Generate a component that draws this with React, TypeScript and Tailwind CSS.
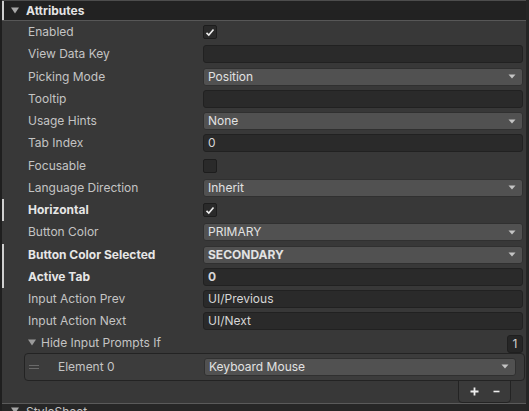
import React from 'react';

type Row =
  | { label: string; kind: 'check'; checked: boolean; bold?: boolean }
  | { label: string; kind: 'text'; value: string; bold?: boolean }
  | { label: string; kind: 'drop'; value: string; bold?: boolean };

const rows: Row[] = [
  { label: 'Enabled', kind: 'check', checked: true },
  { label: 'View Data Key', kind: 'text', value: '' },
  { label: 'Picking Mode', kind: 'drop', value: 'Position' },
  { label: 'Tooltip', kind: 'text', value: '' },
  { label: 'Usage Hints', kind: 'drop', value: 'None' },
  { label: 'Tab Index', kind: 'text', value: '0' },
  { label: 'Focusable', kind: 'check', checked: false },
  { label: 'Language Direction', kind: 'drop', value: 'Inherit' },
  { label: 'Horizontal', kind: 'check', checked: true, bold: true },
  { label: 'Button Color', kind: 'drop', value: 'PRIMARY' },
  { label: 'Button Color Selected', kind: 'drop', value: 'SECONDARY', bold: true },
  { label: 'Active Tab', kind: 'text', value: '0', bold: true },
  { label: 'Input Action Prev', kind: 'text', value: 'UI/Previous' },
  { label: 'Input Action Next', kind: 'text', value: 'UI/Next' },
];

const Arrow = () => (
  <svg width="8" height="5" viewBox="0 0 8 5" className="shrink-0">
    <path d="M0.5 0.5 L7.5 0.5 L4 4.5 Z" fill="#c4c4c4" />
  </svg>
);

const Fold = ({ color = '#a8a8a8' }: { color?: string }) => (
  <svg width="8" height="7" viewBox="0 0 8 7" className="shrink-0">
    <path d="M0 0.5 L8 0.5 L4 6.5 Z" fill={color} />
  </svg>
);

const Check = ({ checked }: { checked: boolean }) => (
  <div className="w-[14px] h-[14px] rounded-[2px] bg-[#2a2a2a] border border-[#1d1d1d] flex items-center justify-center">
    {checked && (
      <svg width="10" height="9" viewBox="0 0 10 9">
        <path d="M1.5 4.8 L3.8 7 L8.5 1.5" stroke="#eeeeee" strokeWidth="1.6" fill="none" />
      </svg>
    )}
  </div>
);

const Dropdown = ({ value, bold }: { value: string; bold?: boolean }) => (
  <div className="flex-1 h-[18px] rounded-[3px] bg-[#515151] border border-[#303030] flex items-center justify-between pl-[4px] pr-[6px]">
    <span className={`text-[#e2e2e2] ${bold ? 'font-bold' : ''}`}>{value}</span>
    <Arrow />
  </div>
);

const TextField = ({ value, bold }: { value: string; bold?: boolean }) => (
  <div className="flex-1 h-[18px] rounded-[3px] bg-[#2a2a2a] border border-[#212121] flex items-center pl-[4px]">
    <span className={`text-[#d6d6d6] ${bold ? 'font-bold' : ''}`}>{value}</span>
  </div>
);

export default function App() {
  return (
    <div
      className="w-[529px] h-[411px] overflow-hidden bg-[#383838] text-[12px] leading-none flex"
      style={{ fontFamily: 'Inter, "Noto Sans", sans-serif' }}
    >
      <div className="w-[2px] bg-[#1f1f1f] shrink-0" />
      <div className="flex-1 flex flex-col border-r-[3px] border-[#252525]">
        <div className="border-t border-[#4d4d4d]" />
        {/* Attributes header */}
        <div className="h-[20px] bg-[#222222] border-b border-[#575757] flex items-center">
          <div className="w-[2px] h-full bg-[#cfcfcf]" />
          <div className="ml-[7px]">
            <Fold />
          </div>
          <span className="ml-[7px] font-bold text-[#e4e4e4] text-[12px]">Attributes</span>
        </div>

        <div className="flex flex-col">
          {rows.map((r) => (
            <div key={r.label} className="h-[22.25px] flex items-center relative">
              {r.bold && <div className="absolute left-0 top-0 bottom-0 w-[2px] bg-[#cfcfcf]" />}
              <div
                className={`w-[201px] pl-[26px] ${r.bold ? 'font-bold text-[#e6e6e6]' : 'text-[#c4c4c4]'}`}
              >
                {r.label}
              </div>
              <div className="flex-1 flex items-center pr-[3px]">
                {r.kind === 'check' && <Check checked={r.checked} />}
                {r.kind === 'text' && <TextField value={r.value} bold={r.bold} />}
                {r.kind === 'drop' && <Dropdown value={r.value} bold={r.bold} />}
              </div>
            </div>
          ))}

          {/* Hide Input Prompts If */}
          <div className="h-[20px] flex items-center">
            <div className="ml-[26px]">
              <Fold color="#9a9a9a" />
            </div>
            <span className="ml-[5px] text-[#c4c4c4]">Hide Input Prompts If</span>
            <div className="ml-auto mr-[3px] mt-[3px] w-[16px] h-[18px] rounded-[3px] bg-[#262626] border border-[#1f1f1f] flex items-center justify-center text-[#d0d0d0]">
              1
            </div>
          </div>

          <div className="ml-[22px] mr-[1px] h-[28px] rounded-[4px] bg-[#3c3c3c] border border-[#232323] flex items-center">
            <div className="ml-[4px] flex flex-col gap-[2px]">
              <div className="w-[10px] h-[1px] bg-[#6a6a6a]" />
              <div className="w-[10px] h-[1px] bg-[#6a6a6a]" />
            </div>
            <span className="ml-[19px] w-[146px] text-[#c4c4c4]">Element 0</span>
            <div className="flex-1 flex mr-[8px]">
              <Dropdown value="Keyboard Mouse" />
            </div>
          </div>

          <div className="flex justify-end pr-[15px]">
            <div className="w-[53px] h-[23px] -mt-[1px] rounded-b-[4px] bg-[#3a3a3a] border border-[#232323] flex items-center justify-center gap-[14px] text-[#eeeeee] font-bold">
              <svg width="9" height="9" viewBox="0 0 9 9">
                <path d="M4.5 0.5 V8.5 M0.5 4.5 H8.5" stroke="#eeeeee" strokeWidth="1.8" />
              </svg>
              <svg width="7" height="9" viewBox="0 0 7 9">
                <path d="M0.5 4.5 H6.5" stroke="#eeeeee" strokeWidth="1.6" />
              </svg>
            </div>
          </div>
        </div>

        {/* StyleSheet header */}
        <div className="mt-auto h-[8px] bg-[#262626] border-t border-[#5a5a5a] flex items-start overflow-hidden">
          <div className="ml-[9px] mt-[3px]">
            <Fold />
          </div>
          <span className="ml-[7px] mt-[2px] text-[#c4c4c4] leading-[12px]">StyleSheet</span>
        </div>
      </div>
    </div>
  );
}
